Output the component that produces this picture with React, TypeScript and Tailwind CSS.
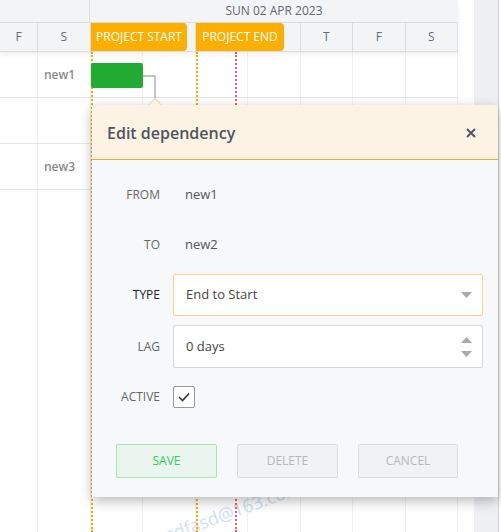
import React from 'react';

const days = ['F', 'S', '', '', '', '', 'T', 'F', 'S'];

function Row({ label, dark, tall, children }: { label: string; dark?: boolean; tall?: boolean; children: React.ReactNode }) {
  return (
    <div className={`flex items-center ${tall ? 'mt-px h-[43px]' : 'h-[42px]'}`}>
      <div className={`w-[68px] text-right text-[12px] ${dark ? 'text-[#222]' : 'text-[#666]'}`}>{label}</div>
      <div className="ml-[13px] flex h-full flex-1 items-center">{children}</div>
    </div>
  );
}

export default function App() {
  return (
    <div className="relative h-[532px] w-[501px] overflow-hidden bg-white font-['Open_Sans',sans-serif]">
      <div className="flex h-full">
        {/* GANTT */}
        <div className="relative flex w-[458px] flex-col">
          <div className="relative z-10 bg-[#f3f4f6] shadow-[0_3px_5px_rgba(0,0,0,0.06)]">
            <div className="flex h-[23px] border-b border-[#dcdde0]">
              <div className="w-[90px] border-r border-[#dcdde0]" />
              <div className="flex flex-1 items-center justify-center text-[12px] text-[#5f6670]">SUN 02 APR 2023</div>
            </div>
            <div className="relative grid h-[29px] grid-cols-[38px_repeat(8,1fr)] border-b border-[#dcdde0]">
              {days.map((d, i) => (
                <div key={i} className="flex items-center justify-center border-r border-[#dcdde0] text-[12px] text-[#666c74]">{d}</div>
              ))}
              <div className="absolute left-[91px] top-0 flex h-[28px] w-[96px] items-center justify-center rounded-r-[4px] bg-[#fbaf00] text-[12px] text-white">PROJECT START</div>
              <div className="absolute left-[196px] top-0 flex h-[28px] w-[88px] items-center justify-center rounded-r-[4px] bg-[#fbaf00] text-[12px] text-white">PROJECT END</div>
            </div>
          </div>

          {/* BODY */}
          <div className="relative flex-1">
            <div className="grid h-full grid-cols-[38px_repeat(8,1fr)]">
              {days.map((_, i) => (
                <div key={i} className="border-r border-[#f1f1f1]" />
              ))}
            </div>
            <div className="absolute inset-x-0 top-0">
              {['new1', '', 'new3'].map((t, i) => (
                <div key={i} className="flex h-[46px] items-center border-b border-[#e8e8e8] pl-[44px] text-[12px] font-semibold text-[#8a8a8a]">{t}</div>
              ))}
            </div>
            <span className="absolute left-[166px] top-[470px] origin-left -rotate-[20deg] whitespace-nowrap text-[18px] text-[#d0e1f6]">sdfasd@163.com</span>
            <div className="absolute bottom-0 left-[91px] top-0 border-l-2 border-dotted border-[#f7ad00]" />
            <div className="absolute bottom-0 left-[196px] top-0 border-l-2 border-dotted border-[#f7ad00]" />
            <div className="absolute bottom-0 left-[235px] top-0 border-l-2 border-dotted border-[#f05a66]" />
            <div className="absolute left-[91px] top-[11px] h-[25px] w-[52px] rounded-[2px] bg-[#22ab33]" />
            <svg className="absolute left-[143px] top-[20px]" width="16" height="32">
              <path d="M0 4 H12 V32" fill="none" stroke="#c4c4c4" strokeWidth="2" />
            </svg>
          </div>
        </div>
        <div className="w-[16px]" />
        <div className="w-[24px] bg-[#eef0f4]" />
        <div className="w-px bg-[#cfd1d5]" />
      </div>

      {/* POPUP */}
      <div className="absolute left-[92px] top-[105px] flex h-[392px] w-[406px] flex-col bg-[#f7f8fa] shadow-[0_4px_12px_rgba(0,0,0,0.28)]">
        <div className="absolute left-[58px] top-[-5px] h-[10px] w-[10px] rotate-45 border-l border-t border-[#e4d8c6] bg-[#fdf3e5]" />
        <div className="relative flex h-[55px] items-center justify-between border-b border-[#f3a83c] bg-[#fdf3e5] pl-[15px] pr-[22px] pt-px">
          <span className="text-[16px] font-semibold text-[#4d5560]">Edit dependency</span>
          <svg width="10" height="10" viewBox="0 0 10 10">
            <path d="M1 1 L9 9 M9 1 L1 9" stroke="#4d5560" strokeWidth="2" />
          </svg>
        </div>
        <div className="flex flex-col gap-[8px] pt-[14px] pr-[15px]">
          <Row label="FROM"><span className="pl-[12px] text-[13px] text-[#555]">new1</span></Row>
          <Row label="TO"><span className="pl-[12px] text-[13px] text-[#555]">new2</span></Row>
          <Row label="TYPE" dark>
            <div className="flex h-full w-full items-center justify-between rounded-[2px] border border-[#fcd38a] bg-white pl-[12px] pr-[10px] text-[13px] text-[#444]">
              <span>End to Start</span>
              <svg width="11" height="6" viewBox="0 0 11 6"><path d="M0 0 H11 L5.5 6 Z" fill="#aaa" /></svg>
            </div>
          </Row>
          <Row label="LAG" tall>
            <div className="flex h-full w-full items-center justify-between rounded-[2px] border border-[#d8d8d8] bg-white pl-[12px] pr-[10px] text-[13px] text-[#444]">
              <span>0 days</span>
              <div className="flex flex-col gap-[8px]">
                <svg width="11" height="6" viewBox="0 0 11 6"><path d="M0 6 H11 L5.5 0 Z" fill="#aaa" /></svg>
                <svg width="11" height="6" viewBox="0 0 11 6"><path d="M0 0 H11 L5.5 6 Z" fill="#aaa" /></svg>
              </div>
            </div>
          </Row>
          <Row label="ACTIVE">
            <div className="flex h-[22px] w-[22px] items-center justify-center rounded-[2px] border border-[#9a9a9a] bg-white">
              <svg width="12" height="10" viewBox="0 0 12 10"><path d="M1 5 L4.5 8.5 L11 1.5" fill="none" stroke="#333" strokeWidth="1.6" /></svg>
            </div>
          </Row>
        </div>
        <div className="mt-[26px] flex gap-[20px] pl-[24px]">
          <button className="h-[34px] w-[101px] rounded-[2px] border border-[#a8e4b4] bg-[#e9f5ee] text-[12px] text-[#2fcb55]">SAVE</button>
          <button className="h-[34px] w-[101px] rounded-[2px] border border-[#dcdcdc] bg-[#f1f2f4] text-[12px] text-[#b8b8b8]">DELETE</button>
          <button className="h-[34px] w-[100px] rounded-[2px] border border-[#dcdcdc] bg-[#f1f2f4] text-[12px] text-[#b8b8b8]">CANCEL</button>
        </div>
      </div>
    </div>
  );
}
